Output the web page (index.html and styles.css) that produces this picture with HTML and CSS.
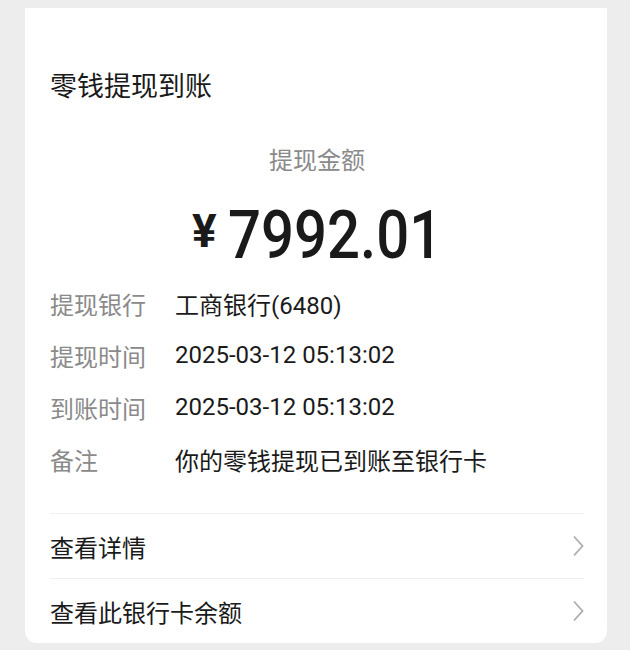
FILE: index.html
```html
<!DOCTYPE html>
<html lang="zh-CN">
<head>
    <meta charset="UTF-8">
    <meta name="viewport" content="width=device-width, initial-scale=1.0">
    <title>零钱提现到账</title>
    <link rel="stylesheet" href="styles.css">
</head>
<body>
    <div class="card">
        <h1 class="title">零钱提现到账</h1>
        <div class="sub">提现金额</div>
        <div class="amount">
            <span class="yen">¥</span>
            <span class="num">7992.01</span>
        </div>
        <div class="info">
            <div class="row">
                <span class="label">提现银行</span>
                <span class="value">工商银行(6480)</span>
            </div>
            <div class="row">
                <span class="label">提现时间</span>
                <span class="value">2025-03-12 05:13:02</span>
            </div>
            <div class="row">
                <span class="label">到账时间</span>
                <span class="value">2025-03-12 05:13:02</span>
            </div>
            <div class="row">
                <span class="label">备注</span>
                <span class="value">你的零钱提现已到账至银行卡</span>
            </div>
        </div>
        <div class="links">
            <div class="link">
                <span>查看详情</span>
                <svg class="arrow" width="12" height="22" viewBox="0 0 12 22"><path d="M2 1.5 L10.5 11 L2 20.5" fill="none" stroke="#adadad" stroke-width="1.8"/></svg>
            </div>
            <div class="link">
                <span>查看此银行卡余额</span>
                <svg class="arrow" width="12" height="22" viewBox="0 0 12 22"><path d="M2 1.5 L10.5 11 L2 20.5" fill="none" stroke="#adadad" stroke-width="1.8"/></svg>
            </div>
        </div>
    </div>
</body>
</html>
```

FILE: styles.css
```css
body {
    margin: 0;
    background-color: #ededed;
    font-family: Roboto, "Noto Sans CJK SC", sans-serif;
    color: #1a1a1a;
}
.card {
    margin: 8px 23px 0 25px;
    height: 635px;
    box-sizing: border-box;
    background-color: white;
    border-radius: 0 0 12px 12px;
    padding: 59px 23px 0 25px;
}
.title {
    margin: 0;
    font-size: 27px;
    font-weight: normal;
    line-height: 40px;
}
.sub {
    margin-top: 37px;
    text-align: center;
    font-size: 24px;
    line-height: 34px;
    color: #8a8a8a;
}
.amount {
    margin-top: 18px;
    height: 80px;
    display: flex;
    justify-content: center;
    align-items: center;
}
.yen {
    font-size: 46px;
    font-weight: bold;
    margin-right: 11px;
    margin-top: -10px;
}
/* narrow digits, like the app's DIN face */
.num {
    font-size: 66px;
    font-weight: 500;
    line-height: 80px;
    transform: scaleX(0.88);
    transform-origin: left center;
    margin-right: -29px;
}
.info {
    margin-top: 1px;
}
.row {
    display: flex;
    height: 52px;
    align-items: center;
    font-size: 24px;
}
.label {
    width: 125px;
    color: #8a8a8a;
}
.links {
    margin-top: 28px;
}
.link {
    display: flex;
    justify-content: space-between;
    align-items: center;
    height: 64px;
    border-top: 1px solid #efefef;
    font-size: 24px;
}
.arrow {
    display: block;
}
```
